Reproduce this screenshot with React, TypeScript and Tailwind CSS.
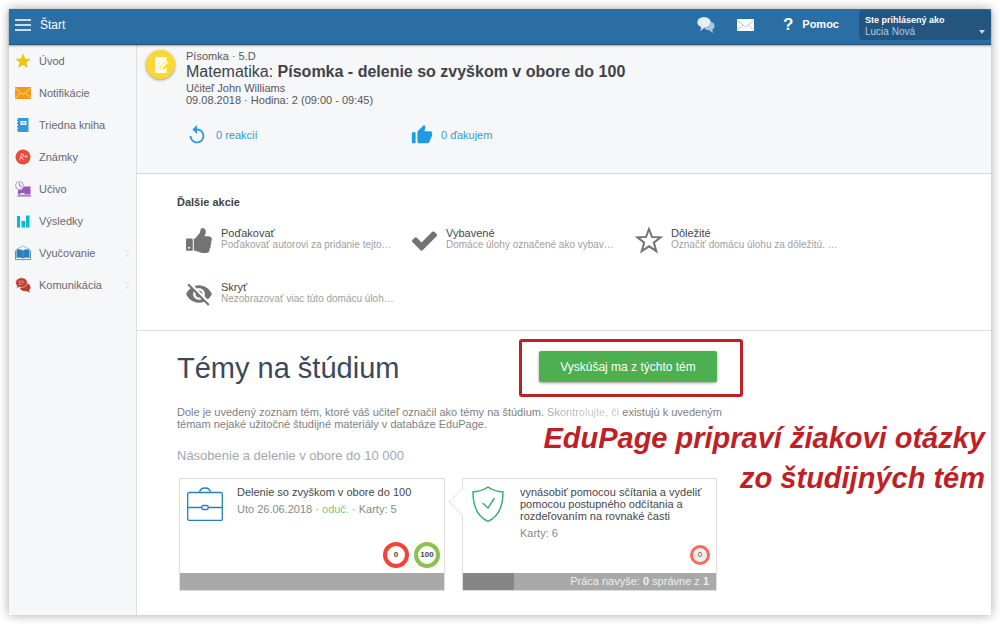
import type { ReactNode } from "react";
import { MdReplay, MdThumbUp, MdVisibilityOff } from "react-icons/md";

const StarIcon = () => (
  <svg viewBox="0 0 16 16" className="size-4" fill="#f1c40f">
    <path d="M8 .4l2.1 5.1 5.6.4-4.3 3.6 1.4 5.5L8 12l-4.8 3 1.4-5.5L.3 5.9l5.6-.4z" />
  </svg>
);

const EnvelopeIcon = () => (
  <svg viewBox="0 0 16 16" className="size-4">
    <rect y="2" width="16" height="12" fill="#f39c12" />
    <path d="M0 3l8 6.500 8-6.500M0 13.500l5.500-5.500M16 13.500l-5.500-5.500" fill="none" stroke="#fbe0b3" strokeWidth=".8" />
  </svg>
);

const NotebookIcon = () => (
  <svg viewBox="0 0 16 16" className="size-4">
    <path d="M3 1h10.500v14H3zM2 2.500h2v1.500H2zM2 5.500h2v1.500H2zM2 9h2v1.500H2zM2 12h2v1.500H2z" fill="#3498db" />
    <rect x="5.500" y="4" width="6" height="4" fill="#fff" />
    <path d="M6.500 5.500h4M6.500 6.800h4" stroke="#3498db" strokeWidth=".6" />
  </svg>
);

const GradeIcon = () => (
  <svg viewBox="0 0 16 16" className="size-4">
    <circle cx="8" cy="8" r="7.500" fill="#e74c3c" />
    <path d="M4.500 11.500L6.500 5q2.500 0 2 2T6 8.500l3 2.500M9.500 7.500h3M11 6v3" fill="none" stroke="#fbd9d5" strokeWidth=".8" />
  </svg>
);

const CurriculumIcon = () => (
  <svg viewBox="0 0 16 16" className="size-4">
    <path d="M3 9h3.500L9 5.500h6.500V13.500H3zM2.500 14.200H16v1.300H2.500z" fill="#9b59b6" />
    <path d="M5.500 12h4v1.500h-4z" fill="#f5f7f9" />
    <circle cx="4.500" cy="4.500" r="4" fill="#f5f7f9" stroke="#b785cb" strokeWidth=".9" />
    <path d="M4.500 2v3H7" fill="none" stroke="#9b59b6" strokeWidth=".8" />
  </svg>
);

const BarsIcon = () => (
  <svg viewBox="0 0 16 16" className="size-4" fill="#00bcd4">
    <path d="M2 3h3v11.500H2zM6.500 8H10v6.500H6.500zM11 2.500h3.500v12H11z" />
  </svg>
);

const BookIcon = () => (
  <svg viewBox="0 0 16 16" className="size-4">
    <path d="M1 4.500l7-3.500 7 3.500" fill="none" stroke="#7fb5da" strokeWidth=".8" />
    <path d="M1.500 4.500Q5 3.500 8 5.500q3-2 6.500-1V13Q11 12 8 13.500 5 12 1.500 13z" fill="#2980b9" />
    <path d="M.5 5.500v9H7l1 .8 1-.8h6.500v-9" fill="none" stroke="#2980b9" strokeWidth=".8" />
    <path d="M8 5.500v8" stroke="#69a6d0" strokeWidth=".7" />
  </svg>
);

const TalkIcon = () => (
  <svg viewBox="0 0 16 16" className="size-4">
    <path d="M9.500 6c3.700 0 6 1.800 6 4.300 0 1.200-.6 2.200-1.500 2.900l1 2.300-3-1.300c-3.700.6-6.500-1-7-3.400z" fill="#c0392b" />
    <path d="M6.500.8c3.600 0 5.800 2.200 5.800 4.800s-2.200 4.800-5.800 4.800c-.8 0-1.500-.1-2.100-.3L1.500 11.500l.6-2.700C1 8 .6 6.800.6 5.600.6 3 3 .8 6.500.8z" fill="#c0392b" stroke="#f5f7f9" strokeWidth=".6" />
    <path d="M3.500 4h6M3.500 5.700h6M3.500 7.400h4" stroke="#e3a29b" strokeWidth=".7" />
  </svg>
);

const Chevron = () => (
  <svg viewBox="0 0 6 10" className="h-[9px] w-[6px]" fill="none" stroke="#d3d6da">
    <path d="M1 1l4 4-4 4" />
  </svg>
);

const FistIcon = () => (
  <svg viewBox="0 0 1792 1792" className="size-[29px]" fill="currentColor">
    <path d="M320 1344q0-26-19-45t-45-19q-27 0-45.500 19t-18.500 45q0 27 18.500 45.500t45.500 18.500q26 0 45-18.500t19-45.500zm160-512v640q0 26-19 45t-45 19h-288q-26 0-45-19t-19-45v-640q0-26 19-45t45-19h288q26 0 45 19t19 45zm1184 0q0 86-55 149 15 44 15 76 3 76-43 137 17 56 0 117-15 57-54 94 9 112-49 181-64 76-197 78h-129q-66 0-144-15.500t-121.500-29-120.500-39.500q-123-43-158-44-26-1-45-19.500t-19-44.500v-641q0-25 18-43.500t43-20.500q24-2 76-59t101-121q68-87 101-120 18-18 31-48t17.500-48.500 13.500-60.500q7-39 12.500-61t19.500-52 34-50q19-19 45-19 46 0 82.500 10.500t60 26 40 40.500 24 45 12 50 5 45 .5 39q0 38-9.500 76t-19 60-27.500 56q-3 6-10 18t-11 22-8 24h277q78 0 135 57t57 135z" />
  </svg>
);

const CheckIcon = () => (
  <svg viewBox="0 0 1792 1792" className="size-[29px]" fill="currentColor">
    <path d="M1671 566q0 40-28 68l-724 724-136 136q-28 28-68 28t-68-28l-136-136-362-362q-28-28-28-68t28-68l136-136q28-28 68-28t68 28l294 295 656-657q28-28 68-28t68 28l136 136q28 28 28 68z" />
  </svg>
);

const StarOutlineIcon = () => (
  <svg viewBox="0 0 28 28" className="size-7" fill="none" stroke="currentColor" strokeWidth="2">
    <path d="M14 3l3 8 8.700.3-6.900 5.300 2.500 8.600L14 20.300l-7.300 4.900 2.500-8.600-6.900-5.300L11 11z" />
  </svg>
);

const menu: { label: string; icon: ReactNode; nested?: boolean }[] = [
  { label: "Úvod", icon: <StarIcon /> },
  { label: "Notifikácie", icon: <EnvelopeIcon /> },
  { label: "Triedna kniha", icon: <NotebookIcon /> },
  { label: "Známky", icon: <GradeIcon /> },
  { label: "Učivo", icon: <CurriculumIcon /> },
  { label: "Výsledky", icon: <BarsIcon /> },
  { label: "Vyučovanie", icon: <BookIcon />, nested: true },
  { label: "Komunikácia", icon: <TalkIcon />, nested: true },
];

const actions: { title: string; text: string; icon: ReactNode }[] = [
  { title: "Poďakovať", text: "Poďakovať autorovi za pridanie tejto…", icon: <FistIcon /> },
  { title: "Vybavené", text: "Domáce úlohy označené ako vybav…", icon: <CheckIcon /> },
  { title: "Dôležité", text: "Označiť domácu úlohu za dôležitú. …", icon: <StarOutlineIcon /> },
  { title: "Skryť", text: "Nezobrazovať viac túto domácu úloh…", icon: <MdVisibilityOff className="size-[28px]" /> },
];

function Header() {
  return (
    <header className="relative z-10 flex h-9 items-stretch border-b border-[#20537d] bg-[#2b6ea3] text-white shadow-[0_1px_2px_rgba(0,0,0,0.35)]">
      <button className="flex items-center gap-2 pb-1 pl-[6px] text-[12px]">
        <svg viewBox="0 0 16 12" className="h-3 w-4" stroke="#fff" strokeWidth="1.500">
          <path d="M0 1h16M0 6h16M0 11h16" />
        </svg>
        <span className="pl-px">Štart</span>
      </button>
      <nav className="ml-auto flex items-center">
        <button aria-label="Správy" className="mr-[22px] pb-1">
          <svg viewBox="0 0 18 16" className="h-4 w-[18px]">
            <path d="M9 5h5c2 0 3.500 1.800 3.500 4 0 1.800-1 3-2.200 3.500L16 16l-3.800-2.800C9 13.200 7 12 7 10z" fill="#a9c9e3" />
            <path d="M7 0c4 0 6.800 2.300 6.800 5.300S11 10.800 7.500 10.800L3.500 14l.6-3.900C1.500 9.300.3 7.500.3 5.300.3 2.300 3 0 7 0z" fill="#e3eef7" stroke="#5b93c0" strokeWidth=".5" />
          </svg>
        </button>
        <button aria-label="Pošta" className="mr-[29px] pb-1">
          <svg viewBox="0 0 17 12" className="h-3 w-[17px]">
            <rect width="17" height="12" rx=".5" fill="#fff" />
            <path d="M.5 1.500L8.500 8l8-6.500M.5 11l5.500-5M16.500 11L11 6" fill="none" stroke="#9dbbd3" strokeWidth=".8" />
          </svg>
        </button>
        <a href="#pomoc" className="mr-5 flex items-center gap-[9px] pb-1 text-[11px] font-bold">
          <span className="text-[17px]">?</span>
          Pomoc
        </a>
        <button className="mt-px mb-1 flex w-[132px] items-end self-stretch rounded-sm bg-[#23557f] px-1.5 pb-0.5 text-left">
          <span className="grow text-[9px] leading-3">
            <b className="block">Ste prihlásený ako</b>
            <span className="block text-[10px] text-[#a5cdef]">Lucia Nová</span>
          </span>
          <svg viewBox="0 0 6 4" className="mb-1 h-1 w-1.5" fill="#c9d5df">
            <path d="M0 0h6L3 4z" />
          </svg>
        </button>
      </nav>
    </header>
  );
}

function Sidebar() {
  return (
    <nav className="w-32 shrink-0 border-r border-[#dcdee1] bg-[#f5f7f9]">
      <ul>
        {menu.map((item) => (
          <li key={item.label}>
            <a href="#menu" className="flex h-8 items-center gap-2 px-1.5 text-[11px] text-[#68696f]">
              {item.icon}
              <span className="grow">{item.label}</span>
              {item.nested && <Chevron />}
            </a>
          </li>
        ))}
      </ul>
    </nav>
  );
}

function Summary() {
  return (
    <section className="flex h-[129px] gap-[11px] border-b border-[#d5d7da] bg-[#f5f7f9] pl-[9px]">
      <div className="mt-[5px] flex size-[29px] shrink-0 items-center justify-center rounded-full bg-[#fdd835] shadow-[0_1px_3px_rgba(0,0,0,0.4)]">
        <svg viewBox="0 0 16 16" className="size-4">
          <path d="M2 0h11.500v4L9 9v3h2.500l2-2v6H2z" fill="#fff" />
          <path d="M4 4h5M4 7h4M4 10h2.500" stroke="#fee98a" strokeWidth=".8" />
          <path d="M6.500 12.500l1-3L13.500 3.500l2 2-6 6z" fill="#fff" stroke="#fdd835" strokeWidth=".7" />
        </svg>
      </div>
      <div className="pt-[5px] text-[11px] leading-3 text-[#55565b]">
        <p>Písomka · 5.D</p>
        <h1 className="py-px text-[16px] leading-[18px] text-[#3f4349]">
          Matematika: <b>Písomka - delenie so zvyškom v obore do 100</b>
        </h1>
        <p>Učiteľ John Williams</p>
        <p>09.08.2018 · Hodina: 2 (09:00 - 09:45)</p>
        <div className="mt-[18px] flex text-[#2e9be0]">
          <button className="flex w-[225px] items-center gap-2">
            <MdReplay className="size-[22px]" />0 reakcií
          </button>
          <button className="flex items-center gap-2">
            <MdThumbUp className="size-[22px] text-[#1e9be3]" />0 ďakujem
          </button>
        </div>
      </div>
    </section>
  );
}

function Actions() {
  return (
    <section className="h-[157px] border-b border-[#d9dbde] pt-[22px] pl-10">
      <h2 className="text-[11px] leading-3 font-bold text-[#3f4349]">Ďalšie akcie</h2>
      <div className="mt-[5px] grid grid-cols-[repeat(3,225px)]">
        {actions.map((a) => (
          <button key={a.title} className="flex h-[54px] items-center text-left">
            <span className="flex w-11 shrink-0 items-center justify-center text-[#737373]">{a.icon}</span>
            <span className="min-w-0 pb-0.5 whitespace-nowrap">
              <span className="block text-[11px] leading-3 text-[#45464a]">{a.title}</span>
              <span className="block text-[10px] leading-3 text-[#a0a0a0]">{a.text}</span>
            </span>
          </button>
        ))}
      </div>
    </section>
  );
}

function Topics() {
  return (
    <section className="pt-2 pb-6 pl-10">
      <div className="flex items-center">
        <h2 className="w-[342px] text-[29px] leading-9 text-[#3a495c]">Témy na štúdium</h2>
        <div className="h-[58px] rounded-[3px] border-3 border-[#c11f26] pt-[9px] pr-[23px] pl-[17px]">
          <button className="h-[31px] w-[178px] rounded-xs bg-[#4caf50] text-[12px] text-white shadow-[0_1px_3px_rgba(0,0,0,0.4)]">
            Vyskúšaj ma z týchto tém
          </button>
        </div>
      </div>
      <p className="mt-[9px] max-w-[560px] text-[11px] leading-3 text-[#7d7f83]">
        Dole je uvedený zoznam tém, ktoré váš učiteľ označil ako témy na štúdium.{" "}
        <span className="bg-linear-to-r from-[#a0a1a3] via-[#c4c4c4] to-[#c8c8c8] bg-clip-text text-transparent">Skontrolujte, či</span>{" "}
        existujú k uvedeným
        <br />
        témam nejaké užitočné študijné materiály v databáze EduPage.
      </p>
      <h3 className="mt-[18px] text-[13px] leading-4 text-[#a1a7b0]">Násobenie a delenie v obore do 10 000</h3>
      <div className="mt-[14px] ml-0.5 flex gap-[17px]">
        <article className="flex h-[113px] w-[266px] flex-col border border-[#dedede]">
          <div className="flex grow">
            <svg viewBox="0 0 36 34" className="mt-2 ml-[7px] h-[34px] w-9 shrink-0" fill="none" stroke="#2980b9" strokeWidth="1.300">
              <rect x=".7" y="5.500" width="34.600" height="28" rx="1.500" />
              <path d="M12.500 5.500C13 2.500 15 1 18 1s5 1.500 5.500 4.500M1 20.500h14M21 20.500h14" />
              <rect x="15" y="18.500" width="6" height="4" rx="1" />
            </svg>
            <div className="mt-[7px] ml-3.5 text-[11px] leading-3">
              <h4 className="text-[#45464a]">Delenie so zvyškom v obore do 100</h4>
              <p className="mt-[5px] text-[#88898c]">
                Uto 26.06.2018 · <span className="text-[#7bc67e]">oduč.</span> · Karty: 5
              </p>
            </div>
          </div>
          <div className="mr-1 mb-[5px] flex items-center justify-end gap-[5px] text-[8px] font-bold text-[#444]">
            <span className="flex size-[26px] items-center justify-center rounded-full border-4 border-[#f44336]">0</span>
            <span className="flex size-[26px] items-center justify-center rounded-full border-4 border-[#8bc34a]">100</span>
          </div>
          <div className="h-[17px] bg-[#a9a9a9]" />
        </article>
        <article className="relative flex h-[113px] w-[255px] flex-col border border-[#dedede]">
          <svg viewBox="0 0 15 28" className="absolute top-[9px] -left-[15px] h-7 w-[15px]">
            <path d="M15 .5L1 14l14 13.500" fill="#fff" stroke="#dedede" />
          </svg>
          <div className="flex grow">
            <svg viewBox="0 0 32 36" className="mt-[7px] ml-[9px] h-9 w-8 shrink-0" fill="none" stroke="#2eb06a" strokeWidth="1.400">
              <path d="M16 1C12 4 6 5.500 1 6c0 13 3 24 15 29.300C28 30 31 19 31 6 26 5.500 20 4 16 1z" />
              <path d="M10.500 17l5.500 5 6.500-10" />
            </svg>
            <div className="mt-[7px] ml-4 text-[11px] leading-3">
              <h4 className="w-[188px] text-[#45464a]">vynásobiť pomocou sčítania a vydeliť pomocou postupného odčítania a rozdeľovaním na rovnaké časti</h4>
              <p className="mt-[5px] text-[#88898c]">Karty: 6</p>
            </div>
          </div>
          <span className="mr-1.5 mb-2 flex size-5 items-center justify-center self-end rounded-full border-3 border-[#f8695f] bg-[#eee] text-[8px] text-[#555]">0</span>
          <div className="flex h-[17px] bg-[#a9a9a9] text-[11px] leading-[17px] text-[#eee]">
            <span className="w-[51px] bg-[#868686]" />
            <span className="grow pr-[7px] text-right">
              Práca navyše: <b>0</b> správne z <b>1</b>
            </span>
          </div>
        </article>
      </div>
    </section>
  );
}

export default function App() {
  return (
    <div className="min-h-screen bg-white px-[9px] pt-[9px] pb-[9px] font-['Liberation_Sans',Arial,sans-serif]">
      <div className="relative flex min-h-[calc(100vh-18px)] flex-col bg-white shadow-[0_0_10px_rgba(0,0,0,0.35)]">
        <Header />
        <div className="flex grow">
          <Sidebar />
          <main className="min-w-0 grow">
            <Summary />
            <Actions />
            <Topics />
          </main>
        </div>
        <p className="absolute top-[409px] right-1.5 text-right text-[29px] leading-[40px] font-bold whitespace-nowrap text-[#c11f26] italic">
          EduPage pripraví žiakovi otázky
          <br />
          zo študijných tém
        </p>
      </div>
    </div>
  );
}
